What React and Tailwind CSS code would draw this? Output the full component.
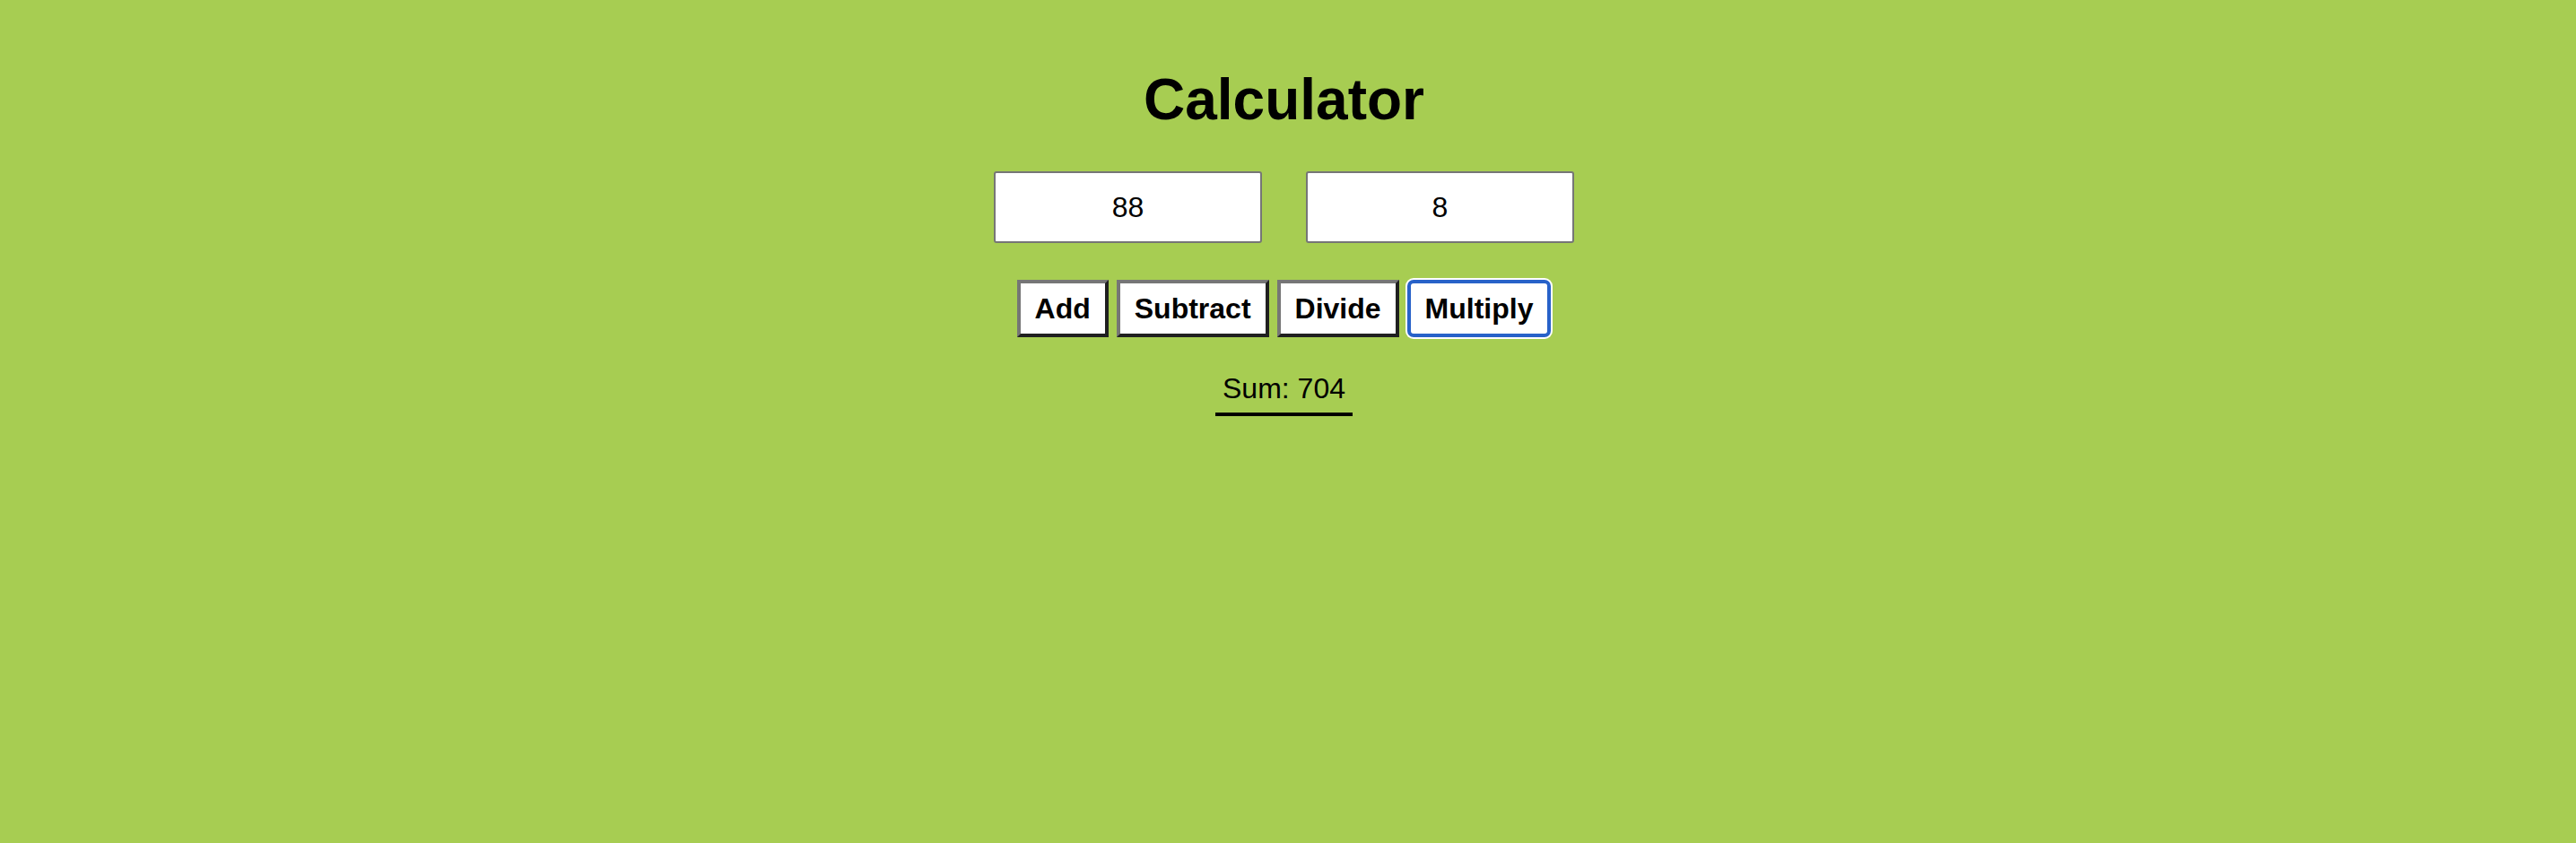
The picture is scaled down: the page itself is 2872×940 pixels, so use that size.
import React from "react";

export default function App() {
  const btn =
    "h-[64px] px-[16px] bg-white text-black font-bold text-[32px] leading-[37px] border-4 border-t-[#767676] border-l-[#767676] border-b-[#202020] border-r-[#202020]";
  return (
    <div
      className="w-full h-[940px] bg-[#a7cd52] text-black pr-[9px]"
      style={{ fontFamily: '"Liberation Sans", Arial, sans-serif' }}
    >
      <div className="flex flex-col items-center">
        <h1 className="pt-[74px] text-[64px] leading-[74px] font-bold">Calculator</h1>
        <div className="mt-[43px] flex gap-[49px]">
          <div className="w-[299px] h-[80px] bg-white border-2 border-[#767676] rounded-[3px] flex items-center justify-center text-[32px]">
            88
          </div>
          <div className="w-[299px] h-[80px] bg-white border-2 border-[#767676] rounded-[3px] flex items-center justify-center text-[32px]">
            8
          </div>
        </div>
        <div className="mt-[41px] flex gap-[9px] items-center">
          <button className={btn}>Add</button>
          <button className={btn}>Subtract</button>
          <button className={btn}>Divide</button>
          <button className="h-[64px] px-[16px] bg-white text-black font-bold text-[32px] leading-[37px] border-4 border-[#2862c9] rounded-[7px] shadow-[0_0_0_2px_#ffffff]">
            Multiply
          </button>
        </div>
        <div className="mt-[31px] px-[8px] pt-[8px] pb-[8px] border-b-4 border-black text-[32px] leading-[37px]">
          Sum: 704
        </div>
      </div>
    </div>
  );
}
